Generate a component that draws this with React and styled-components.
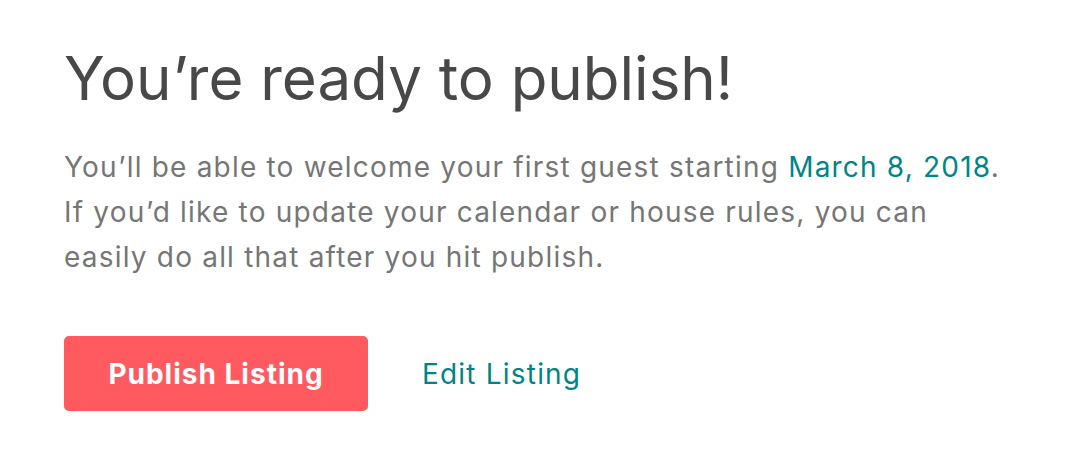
import React from "react";
import styled, { createGlobalStyle } from "styled-components";

const GlobalStyle = createGlobalStyle`
  body {
    margin: 0;
    background: #fff;
    font-family: "Inter", "Liberation Sans", sans-serif;
  }
`;

const Page = styled.div`
  padding: 38px 64px 0;
`;

const Title = styled.h1`
  margin: 0;
  font-size: 60px;
  line-height: 80px;
  font-weight: 400;
  color: #484848;
`;

const Text = styled.p`
  margin: 27px 0 0;
  font-size: 28px;
  line-height: 45px;
  letter-spacing: 1.2px;
  color: #767676;
`;

const Accent = styled.span`
  color: #008489;
`;

const Actions = styled.div`
  display: flex;
  align-items: center;
  gap: 54px;
  margin-top: 56px;
`;

const PrimaryButton = styled.button`
  width: 304px;
  height: 75px;
  border: none;
  border-radius: 5px;
  background: #ff5a5f;
  color: #fff;
  font-family: inherit;
  font-size: 28px;
  font-weight: 700;
  letter-spacing: 1px;
  cursor: pointer;
`;

const LinkButton = styled.a`
  color: #008489;
  font-size: 28px;
  letter-spacing: 1.2px;
  text-decoration: none;
  cursor: pointer;
`;

export default function App() {
  return (
    <>
      <GlobalStyle />
      <Page>
        <Title>You’re ready to publish!</Title>
        <Text>
          You’ll be able to welcome your first guest starting{" "}
          <Accent>March 8, 2018</Accent>.
          <br />
          If you’d like to update your calendar or house rules, you can
          <br />
          easily do all that after you hit publish.
        </Text>
        <Actions>
          <PrimaryButton>Publish Listing</PrimaryButton>
          <LinkButton>Edit Listing</LinkButton>
        </Actions>
      </Page>
    </>
  );
}
